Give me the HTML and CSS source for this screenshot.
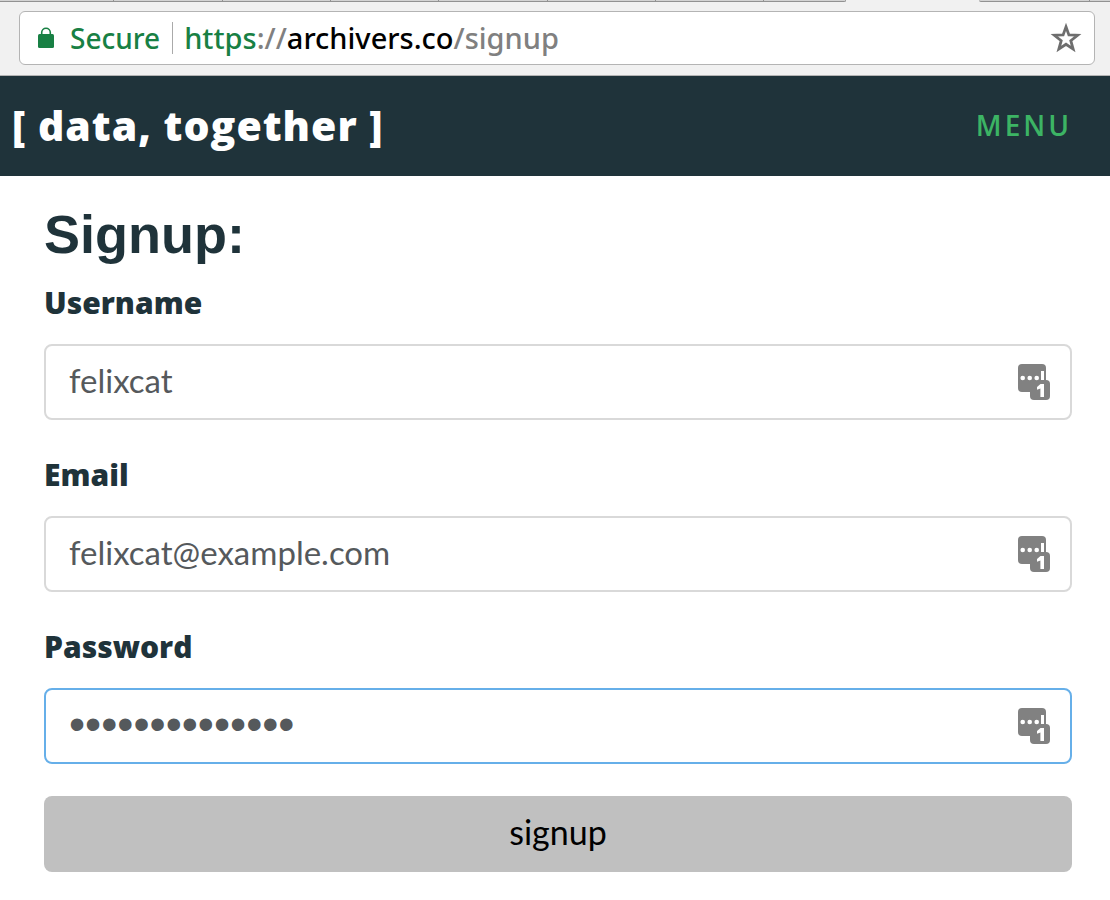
FILE: index.html
```html
<!DOCTYPE html>
<html lang="en">
<head>
<meta charset="utf-8">
<meta name="viewport" content="width=device-width, initial-scale=1">
<title>Signup</title>
<link rel="stylesheet" href="styles.css">
</head>
<body>
<svg class="symbols" aria-hidden="true">
  <symbol id="manager" viewBox="0 0 32 36">
    <rect width="28" height="28" rx="4" fill="#818181"/>
    <rect x="12" y="16" width="20" height="20" rx="4" fill="#818181"/>
    <g fill="#fff">
      <circle cx="4.7" cy="14" r="2.3"/><circle cx="11.7" cy="14" r="2.3"/><circle cx="18.7" cy="14" r="2.3"/>
      <rect x="23" y="7" width="3" height="9"/>
      <path d="M22.5 20H26v13h-3.600v-8.500l-3.400 1.200v-2.800z"/>
    </g>
  </symbol>
</svg>
<div class="browser">
  <div class="tabs">
    <i class="tab"></i><i class="tab"></i><i class="tab"></i><i class="tab"></i><i class="tab"></i><i class="tab"></i><i class="tab"></i><i class="tab tab-last"></i><i class="tab-open"></i><i class="tab tab-after"></i><i class="tab tab-end"></i>
  </div>
  <div class="address">
    <svg class="lock" viewBox="0 0 16 22" aria-hidden="true"><rect y="7" width="16" height="14" rx="1.500" fill="#188044"/><path d="M3.700 8V5.500a4.300 4.300 0 0 1 8.600 0V8" fill="none" stroke="#188044" stroke-width="1.600"/></svg>
    <span class="secure">Secure</span>
    <span class="url"><span class="scheme">https</span>://<span class="host">archivers.co</span>/signup</span>
    <button class="star" type="button" aria-label="Bookmark this page"><svg viewBox="0 0 30 30" aria-hidden="true"><path d="M15 4.500l2.700 7.600 8.200.300-6.400 5.100 2.200 7.900-6.700-4.500-6.700 4.500 2.200-7.900-6.400-5.100 8.200-.300z" fill="none" stroke="#6e6e6e" stroke-width="2.600"/></svg></button>
  </div>
</div>
<header class="header">
  <a class="logo" href="#">[ data, together ]</a>
  <a class="menu" href="#">MENU</a>
</header>
<main class="main">
  <h1 class="title">Signup:</h1>
  <form class="form">
    <div class="field">
      <label class="label" for="username">Username</label>
      <div class="control">
        <input class="input" id="username" type="text" value="felixcat">
        <svg class="manager" aria-hidden="true"><use href="#manager"/></svg>
      </div>
    </div>
    <div class="field">
      <label class="label" for="email">Email</label>
      <div class="control">
        <input class="input" id="email" type="email" value="felixcat@example.com">
        <svg class="manager" aria-hidden="true"><use href="#manager"/></svg>
      </div>
    </div>
    <div class="field">
      <label class="label" for="password">Password</label>
      <div class="control control-active">
        <input class="input password" id="password" type="password" value="felixcatfelixc">
        <svg class="manager" aria-hidden="true"><use href="#manager"/></svg>
      </div>
    </div>
    <button class="submit" type="button">signup</button>
  </form>
</main>
</body>
</html>
```
FILE: styles.css
```css
* { box-sizing: border-box; }
body { margin: 0; background: #fff; color: #1f333a; font-family: Lato, sans-serif; }
.symbols { position: absolute; width: 0; height: 0; }

.browser { background: #f1f1f1; border-bottom: 1px solid #b4b4b4; padding-bottom: 10px; }
.tabs { display: flex; height: 2px; margin-bottom: 9px; }
.tab { flex: 108; background: #d3d3d3; border-right: 1px solid #929292; border-bottom: 1px solid #929292; }
.tab:first-child { flex-grow: 114; }
.tab-last { flex-grow: 81; border-bottom-right-radius: 2px; }
.tab-open { flex: 134; }
.tab-after { flex-grow: 111; border-bottom-left-radius: 2px; }
.tab-end { flex-grow: 20; border-right: 0; }
.address { display: flex; align-items: center; height: 54px; margin: 0 15px 0 19px; padding: 0 12px 0 18px; background: #fff; border: 1px solid #b4b4b4; border-radius: 6px; font: 500 28px/36px "Noto Sans", sans-serif; }
.lock { width: 16px; height: 22px; margin-right: 16px; }
.secure { padding-right: 12px; border-right: 1px solid #aaa; color: #188044; line-height: 32px; }
.url { margin-left: 11px; color: #808080; font-size: 29px; }
.scheme { color: #188044; }
.host { color: #000; }
.star { margin-left: auto; padding: 0; border: 0; background: none; width: 32px; height: 32px; }
.star svg { display: block; width: 32px; height: 32px; }

.header { display: flex; align-items: center; justify-content: space-between; height: 100px; padding: 0 38px 2px 12px; background: #1f333a; }
.logo { color: #fff; font: 800 41px/60px "Open Sans", sans-serif; letter-spacing: 1px; text-decoration: none; }
.menu { color: #3cb464; font: 600 28px/40px "Open Sans", sans-serif; letter-spacing: 3px; text-decoration: none; }

.main { padding: 22px 38px 28px 44px; }
.title { margin: 0 0 10px; font: bold 54px/72px "Liberation Sans", sans-serif; }
.form { display: flex; flex-direction: column; gap: 32px; }
.label { display: block; height: 64px; font: 800 30px/46px "Open Sans", sans-serif; }
.control { display: flex; align-items: center; height: 76px; padding: 0 20px 0 23px; border: 2px solid #d9d9d9; border-radius: 8px; }
.control-active { border-color: #66afe9; }
.input { flex: 1; min-width: 0; height: 60px; padding: 0 0 4px; border: 0; outline: 0; background: none; color: #55595c; font: 33px/40px Lato, sans-serif; }
.password { font: 46px/56px "Liberation Sans", sans-serif; }
.manager { width: 32px; height: 36px; }
.submit { height: 76px; padding: 0 0 4px; border: 0; border-radius: 8px; background: #c0c0c0; color: #000; font: 34px/40px Lato, sans-serif; }
```
